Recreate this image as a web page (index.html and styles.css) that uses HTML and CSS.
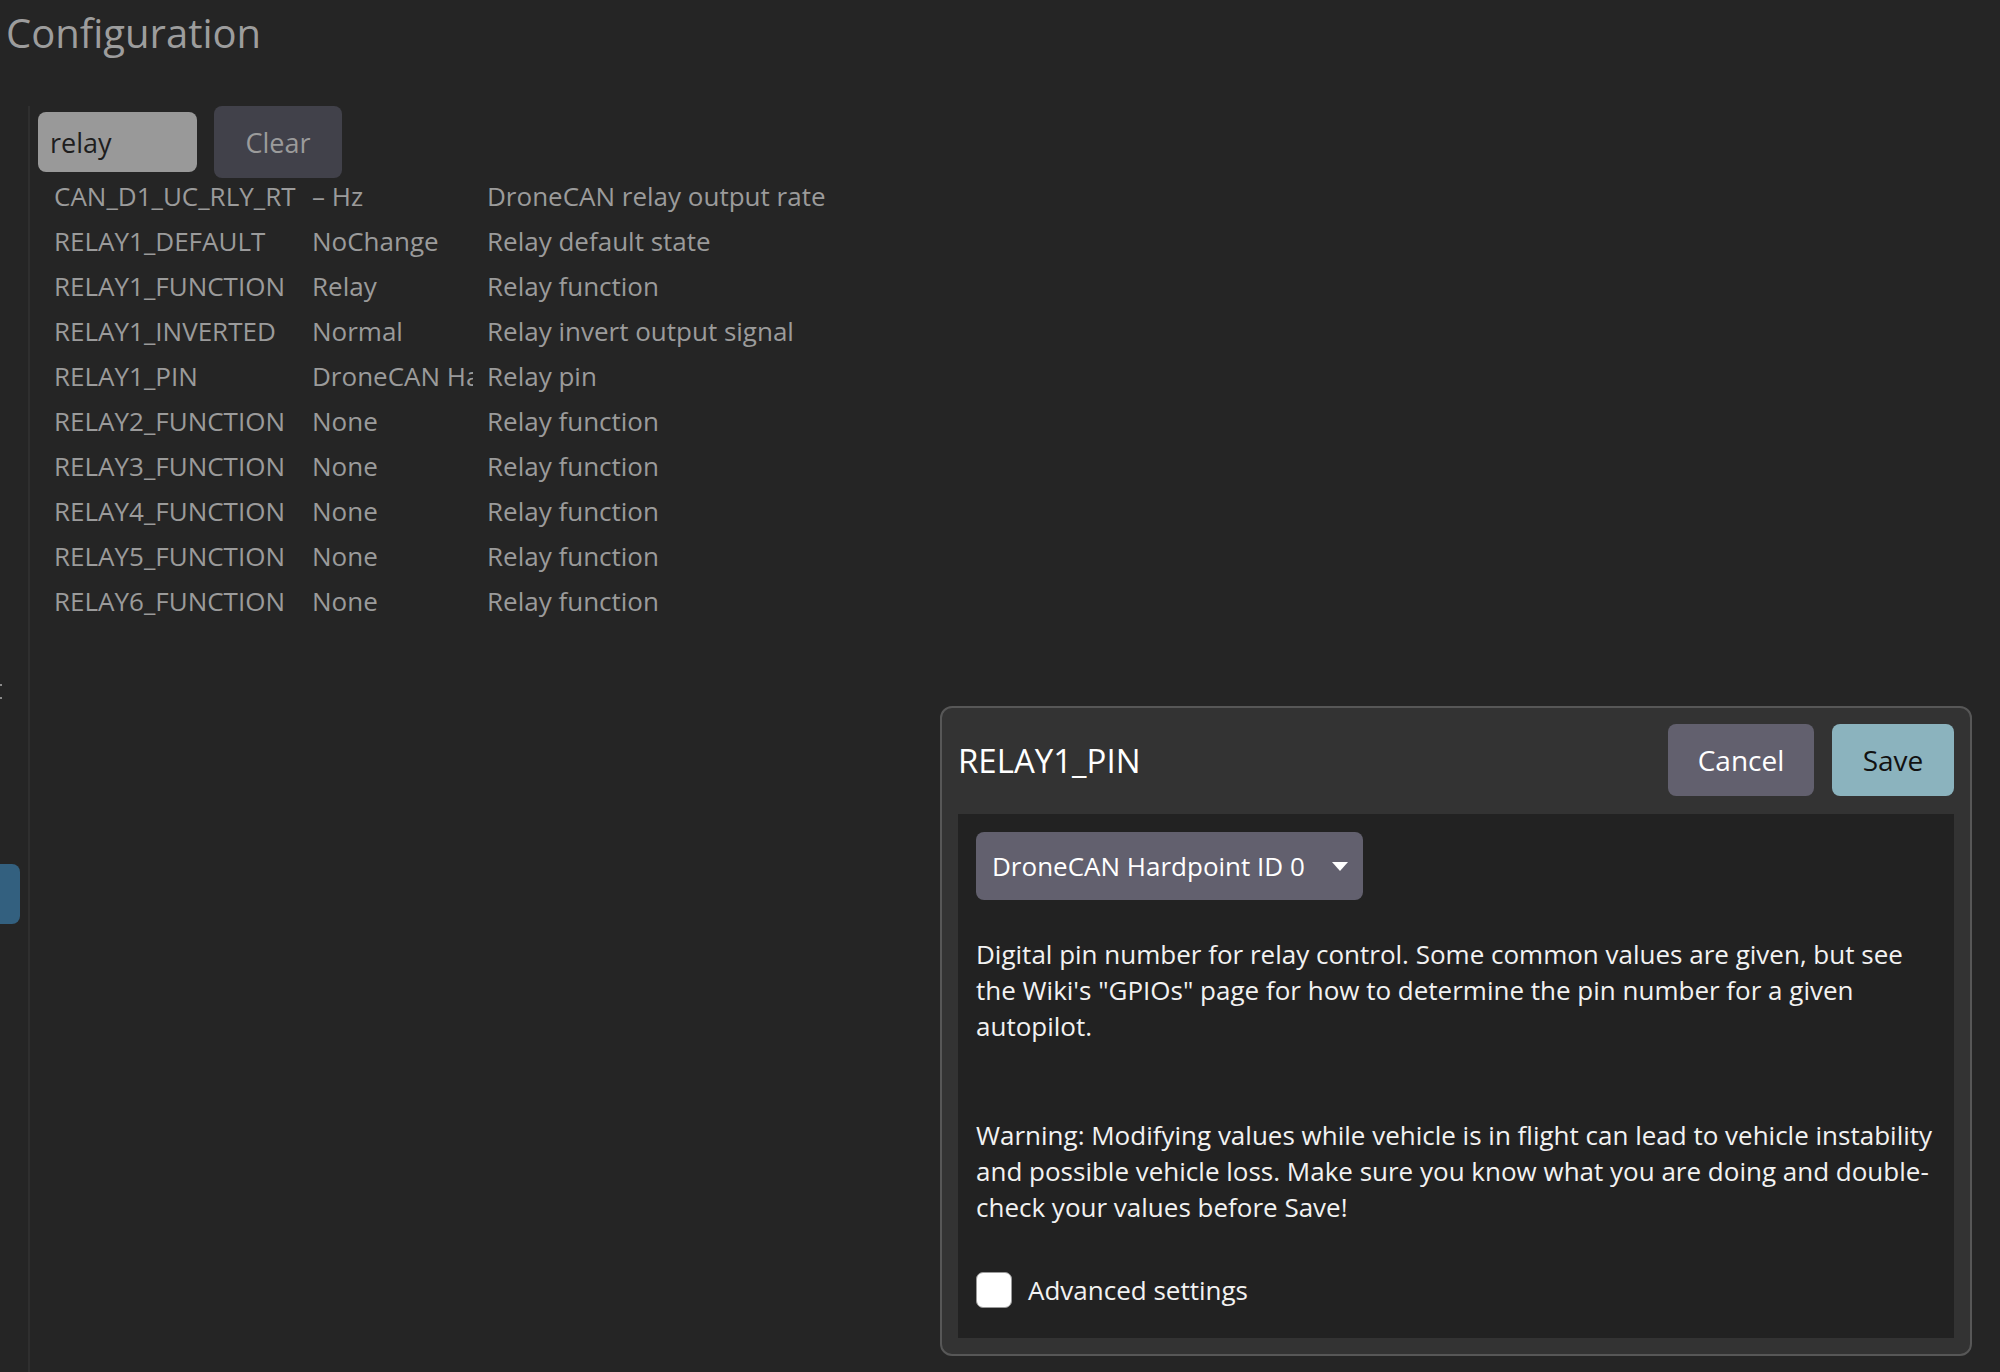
FILE: index.html
```html
<!DOCTYPE html>
<html lang="en">
<head>
    <meta charset="UTF-8">
    <meta name="viewport" content="width=device-width, initial-scale=1.0">
    <title>Configuration</title>
    <link rel="stylesheet" href="styles.css">
</head>
<body>
    <h1 class="page-title">Configuration</h1>
    <div class="workspace">
        <aside class="side">
            <div class="side-marks"></div>
            <div class="side-tab"></div>
        </aside>
        <main class="main">
            <form action="" class="form-search">
                <input type="search" name="param-filter" value="relay">
                <button type="button">Clear</button>
            </form>
            <section class="param-list">
                <div class="param-row"><span>CAN_D1_UC_RLY_RT</span><span class="param-value">&ndash; Hz</span><span>DroneCAN relay output rate</span></div>
                <div class="param-row"><span>RELAY1_DEFAULT</span><span class="param-value">NoChange</span><span>Relay default state</span></div>
                <div class="param-row"><span>RELAY1_FUNCTION</span><span class="param-value">Relay</span><span>Relay function</span></div>
                <div class="param-row"><span>RELAY1_INVERTED</span><span class="param-value">Normal</span><span>Relay invert output signal</span></div>
                <div class="param-row"><span>RELAY1_PIN</span><span class="param-value">DroneCAN Hardpoint ID 0</span><span>Relay pin</span></div>
                <div class="param-row"><span>RELAY2_FUNCTION</span><span class="param-value">None</span><span>Relay function</span></div>
                <div class="param-row"><span>RELAY3_FUNCTION</span><span class="param-value">None</span><span>Relay function</span></div>
                <div class="param-row"><span>RELAY4_FUNCTION</span><span class="param-value">None</span><span>Relay function</span></div>
                <div class="param-row"><span>RELAY5_FUNCTION</span><span class="param-value">None</span><span>Relay function</span></div>
                <div class="param-row"><span>RELAY6_FUNCTION</span><span class="param-value">None</span><span>Relay function</span></div>
            </section>
        </main>
    </div>

    <div class="dialog">
        <div class="dialog-head">
            <h2 class="dialog-title">RELAY1_PIN</h2>
            <div class="dialog-actions">
                <button type="button" class="btn-cancel">Cancel</button>
                <button type="button" class="btn-save">Save</button>
            </div>
        </div>
        <div class="dialog-body">
            <div class="select-box">
                <span>DroneCAN Hardpoint ID 0</span>
                <svg width="16" height="9" viewBox="0 0 16 9"><path d="M0 0h16L8 9z" fill="#fff"/></svg>
            </div>
            <p class="param-doc">Digital pin number for relay control. Some common values are given, but see the Wiki's "GPIOs" page for how to determine the pin number for a given autopilot.</p>
            <p class="param-warning">Warning: Modifying values while vehicle is in flight can lead to vehicle instability and possible vehicle loss. Make sure you know what you are doing and double-check your values before Save!</p>
            <label class="advanced">
                <input type="checkbox">
                <span>Advanced settings</span>
            </label>
        </div>
    </div>
</body>
</html>
```

FILE: styles.css
```css
*{
    margin: 0;
    padding: 0;
    box-sizing: border-box;
}
body {
    width: 2000px;
    height: 1372px;
    overflow: hidden;
    background-color: #252525;
    font-family: "Open Sans", "Liberation Sans", sans-serif;
    color: #9b9b9b;
    position: relative;
}
.page-title {
    font-size: 40px;
    font-weight: normal;
    line-height: 54px;
    margin: 6px 0 46px 6px;
    color: #9d9d9d;
}
.workspace {
    display: flex;
    height: 1266px;
}
.side {
    width: 28px;
    overflow: hidden;
    display: flex;
    flex-direction: column;
}
.side-marks {
    width: 2px;
    height: 15px;
    margin-top: 578px;
    border-top: 2px solid #8a8a8a;
    border-bottom: 2px solid #8a8a8a;
}
.side-tab {
    width: 40px;
    height: 60px;
    margin-top: 165px;
    margin-left: -20px;
    border-radius: 8px;
    background-color: #33607f;
}
.main {
    flex: 1;
    border-left: 2px solid #2f2f2f;
    padding-left: 8px;
}
.form-search {
    display: flex;
    align-items: center;
    column-gap: 17px;
    height: 72px;
}
.form-search input {
    width: 159px;
    height: 60px;
    padding-left: 12px;
    border: none;
    outline: none;
    border-radius: 8px;
    background-color: #999999;
    color: #1e1e1e;
    font-family: inherit;
    font-size: 27px;
}
.form-search button {
    width: 128px;
    height: 72px;
    border: none;
    border-radius: 8px;
    background-color: #41414a;
    color: #9b9b9b;
    font-family: inherit;
    font-size: 27px;
}
.param-list {
    margin-top: -4px;
    margin-left: 16px;
    font-size: 26px;
}
.param-row {
    display: grid;
    grid-template-columns: 244px 161px auto;
    column-gap: 14px;
    height: 45px;
    line-height: 45px;
}
.param-row span {
    white-space: nowrap;
}
.param-value {
    overflow: hidden;
}

/* edit popup */
.dialog {
    position: absolute;
    left: 940px;
    top: 706px;
    width: 1032px;
    height: 650px;
    padding: 16px;
    border: 2px solid #575757;
    border-radius: 12px;
    background-color: #333333;
    color: #f2f2f2;
}
.dialog-head {
    display: flex;
    align-items: center;
    justify-content: space-between;
    height: 72px;
    margin-bottom: 18px;
}
.dialog-title {
    font-size: 33px;
    font-weight: normal;
    color: #ffffff;
}
.dialog-actions {
    display: flex;
    column-gap: 18px;
}
.dialog-actions button {
    height: 72px;
    border: none;
    border-radius: 8px;
    font-family: inherit;
    font-size: 28px;
}
.btn-cancel {
    width: 146px;
    background-color: #62606e;
    color: #ffffff;
}
.btn-save {
    width: 122px;
    background-color: #8bb3be;
    color: #111111;
}
.dialog-body {
    height: 524px;
    padding: 18px;
    background-color: #222222;
    font-size: 26px;
    line-height: 36px;
}
.select-box {
    display: flex;
    align-items: center;
    justify-content: space-between;
    width: 387px;
    height: 68px;
    padding: 0 15px 0 16px;
    border-radius: 8px;
    background-color: #62606e;
    color: #ffffff;
    font-size: 26px;
}
.param-doc {
    margin-top: 36px;
}
.param-warning {
    margin-top: 73px;
}
.advanced {
    display: flex;
    align-items: center;
    column-gap: 16px;
    margin-top: 47px;
}
.advanced input {
    appearance: none;
    width: 36px;
    height: 36px;
    border: 1px solid #9a9a9a;
    border-radius: 7px;
    background-color: #ffffff;
}
```
